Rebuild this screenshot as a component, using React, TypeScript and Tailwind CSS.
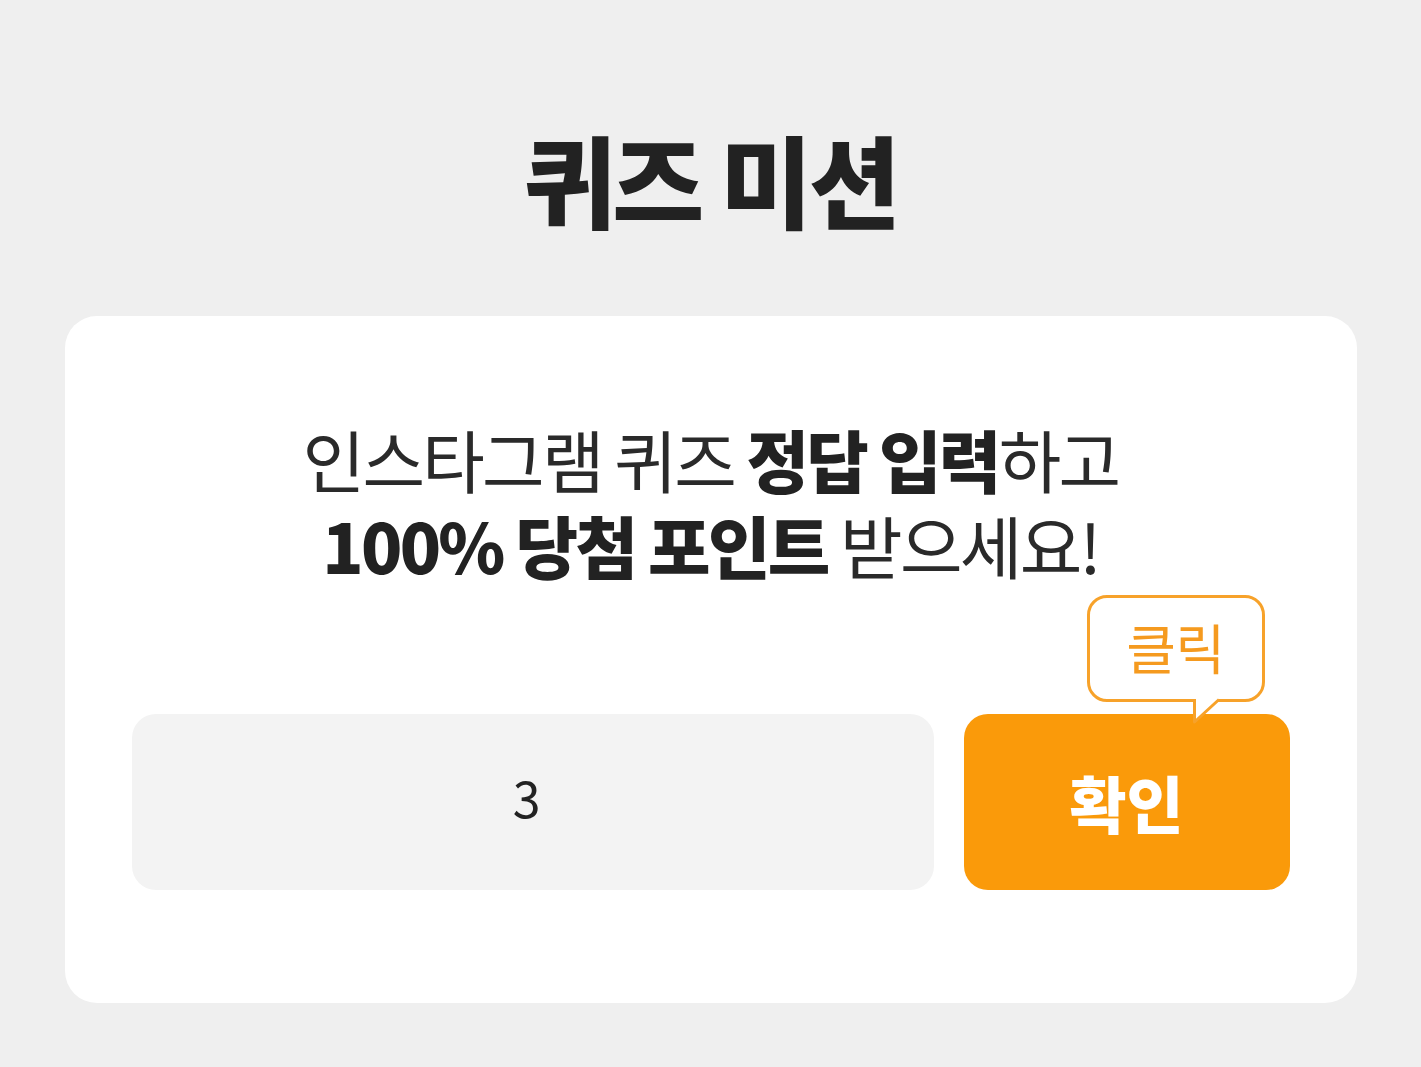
import { useState } from "react";

const font = { fontFamily: '"Noto Sans CJK KR", "Noto Sans", sans-serif' };

export default function App() {
  const [answer, setAnswer] = useState("3");

  return (
    <div className="min-h-[1067px] bg-[#efefef] flex flex-col items-center" style={font}>
      {/* Title */}
      <h1 className="pt-[128px] text-[100px] leading-none font-black tracking-[-0.035em] text-[#222]">
        퀴즈 미션
      </h1>

      {/* Card */}
      <div className="mt-[88px] w-[1292px] h-[687px] bg-white rounded-[32px] px-[67px] flex flex-col">
        <p className="pt-[100px] text-center text-[68px] leading-[86px] tracking-[-0.04em] text-[#2a2a2a]">
          인스타그램 퀴즈 <b className="font-black text-[#222]">정답 입력</b>하고
          <br />
          <b className="font-black text-[#222]">100% 당첨 포인트</b> 받으세요!
        </p>

        <div className="mt-[126px] flex gap-[30px]">
          <input
            value={answer}
            onChange={(e) => setAnswer(e.target.value)}
            className="w-[802px] h-[176px] rounded-[24px] bg-[#f3f3f3] text-center text-[50px] text-[#222] outline-none pr-[12px] pb-[12px]"
            style={font}
          />

          <div className="relative">
            <button className="w-[326px] h-[176px] rounded-[24px] bg-[#fa9a0a] text-white text-[62px] font-black tracking-[0em]">
              확인
            </button>

            {/* Speech bubble */}
            <div className="absolute left-[123px] top-[-119px] w-[178px] h-[107px] rounded-[20px] border-[3px] border-[#f7a22a] bg-white flex items-center justify-center">
              <span className="text-[54px] leading-none tracking-[-0.01em] text-[#f59a1f] -mt-[4px]">클릭</span>
              <svg
                className="absolute left-[103px] top-[100px]"
                width="30"
                height="28"
                viewBox="0 0 30 28"
              >
                <polygon points="1,0 1,24 27,0" fill="white" />
                <polyline points="1.5,1 1.5,24 26,1.5" fill="none" stroke="#f7a22a" strokeWidth="3" strokeLinejoin="round" />
              </svg>
            </div>
          </div>
        </div>
      </div>
    </div>
  );
}
